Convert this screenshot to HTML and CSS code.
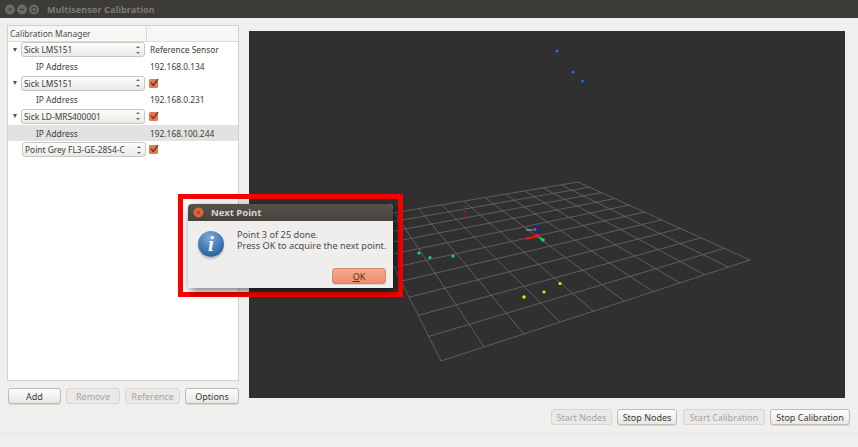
FILE: index.html
```html
<!DOCTYPE html>
<html>
<head>
    <meta charset="UTF-8">
    <title>Multisensor Calibration</title>
    <link rel="stylesheet" href="styles.css">
</head>
<body>
    <div class="window">
        <div class="titlebar">
            <div class="win-controls">
                <svg width="40" height="18" viewBox="0 0 40 18">
                    <circle cx="10" cy="9.5" r="5" fill="#6b6a65"/>
                    <path d="M8.500 8l3 3M11.500 8l-3 3" stroke="#3c3b37" stroke-width="1"/>
                    <circle cx="22" cy="9.5" r="5" fill="#6b6a65"/>
                    <path d="M19.800 9.5h4.400" stroke="#3c3b37" stroke-width="1.2"/>
                    <circle cx="34" cy="9.5" r="5" fill="#6b6a65"/>
                    <rect x="32.100" y="7.600" width="3.800" height="3.800" fill="none" stroke="#3c3b37" stroke-width="1"/>
                </svg>
            </div>
            <span class="win-title">Multisensor Calibration</span>
        </div>

        <div class="main">
            <div class="left-panel">
                <div class="tree">
                    <div class="tree-header">
                        <div class="tree-header-cell">Calibration Manager</div>
                        <div class="tree-header-cell"></div>
                    </div>
                    <div class="tree-row">
                        <div class="tree-col"><span class="expander"></span><div class="combo">Sick LMS151<span class="spin"></span></div></div>
                        <div class="tree-val">Reference Sensor</div>
                    </div>
                    <div class="tree-row">
                        <div class="tree-col child">IP Address</div>
                        <div class="tree-val">192.168.0.134</div>
                    </div>
                    <div class="tree-row">
                        <div class="tree-col"><span class="expander"></span><div class="combo">Sick LMS151<span class="spin"></span></div></div>
                        <div class="tree-val"><svg class="check" width="10" height="10" viewBox="0 0 10 10"><rect y="1" width="9" height="9" rx="1.5" fill="#e8784f"/><path d="M2 4.800l2.300 2.600L9 1.200" fill="none" stroke="#5a3a2c" stroke-width="1.4"/></svg></div>
                    </div>
                    <div class="tree-row">
                        <div class="tree-col child">IP Address</div>
                        <div class="tree-val">192.168.0.231</div>
                    </div>
                    <div class="tree-row">
                        <div class="tree-col"><span class="expander"></span><div class="combo">Sick LD-MRS400001<span class="spin"></span></div></div>
                        <div class="tree-val"><svg class="check" width="10" height="10" viewBox="0 0 10 10"><rect y="1" width="9" height="9" rx="1.5" fill="#e8784f"/><path d="M2 4.800l2.300 2.600L9 1.200" fill="none" stroke="#5a3a2c" stroke-width="1.4"/></svg></div>
                    </div>
                    <div class="tree-row selected">
                        <div class="tree-col child">IP Address</div>
                        <div class="tree-val">192.168.100.244</div>
                    </div>
                    <div class="tree-row">
                        <div class="tree-col"><span class="no-expander"></span><div class="combo">Point Grey FL3-GE-28S4-C<span class="spin"></span></div></div>
                        <div class="tree-val"><svg class="check" width="10" height="10" viewBox="0 0 10 10"><rect y="1" width="9" height="9" rx="1.5" fill="#e8784f"/><path d="M2 4.800l2.300 2.600L9 1.200" fill="none" stroke="#5a3a2c" stroke-width="1.4"/></svg></div>
                    </div>
                </div>
                <div class="tree-buttons">
                    <button class="btn btn-add">Add</button>
                    <button class="btn btn-remove" disabled>Remove</button>
                    <button class="btn btn-reference" disabled>Reference</button>
                    <button class="btn btn-options">Options</button>
                </div>
            </div>

            <div class="viewport">
                <svg class="scene" width="596" height="367" viewBox="249 31 596 367">
                    <!-- grid, one direction -->
                    <path class="grid" d="M441 361L369 217M484.200 346.900L394.500 212.700M523.700 334L418.700 208.700M560 322.100L441.800 204.800M593.500 311.200L463.900 201.100M624.100 301.100L485 197.600M653.200 291.600L505.200 194.200M679.900 282.900L524.600 191M704.800 274.700L543.100 187.800M728.200 267.100L560.900 184.900M750 260L578 182"/>
                    <!-- grid, other direction -->
                    <path class="grid" d="M441 361L750 260M428.700 336.400L724.200 248.300M418.200 315.300L701.100 237.800M409.100 297.200L680.400 228.400M401.200 281.300L661.600 219.900M394.200 267.400L644.500 212.100M388 255L628.900 205.100M382.500 244L614.600 198.600M377.500 234.100L601.400 192.600M373.100 225.100L589.300 187.100M369 217L578 182"/>
                    <g fill="#2468e0">
                        <circle cx="557" cy="51" r="1.600"/>
                        <circle cx="573" cy="72" r="1.600"/>
                        <circle cx="582.500" cy="81" r="1.600"/>
                    </g>
                    <g fill="#14e05a">
                        <circle cx="419" cy="253" r="1.600"/>
                        <circle cx="430" cy="257.500" r="1.600"/>
                        <circle cx="453" cy="256" r="1.600"/>
                    </g>
                    <g fill="#e6f000">
                        <circle cx="524" cy="297" r="1.700"/>
                        <circle cx="544" cy="292" r="1.500"/>
                        <circle cx="560" cy="283.500" r="1.500"/>
                    </g>
                    <g fill="#c8141c">
                        <circle cx="465.500" cy="207" r="0.900"/>
                        <circle cx="465" cy="212" r="0.900"/>
                        <circle cx="465" cy="216.500" r="0.900"/>
                    </g>
                    <!-- sensor frame axes -->
                    <path d="M537.500 236V225" stroke="#1a1ae0" stroke-width="2"/>
                    <path d="M537.500 236L526 239" stroke="#f01010" stroke-width="2"/>
                    <path d="M537.500 236L543 240" stroke="#10d040" stroke-width="2"/>
                    <rect x="541.500" y="238.500" width="3" height="3" fill="#14e05a"/>
                    <rect x="535.500" y="234" width="4" height="4" fill="#e01818"/>
                    <text class="frame-label" x="526" y="231">laser0</text>
                </svg>
            </div>
        </div>

        <div class="action-buttons">
            <button class="btn btn-start-nodes" disabled>Start Nodes</button>
            <button class="btn btn-stop-nodes">Stop Nodes</button>
            <button class="btn btn-start-cal" disabled>Start Calibration</button>
            <button class="btn btn-stop-cal">Stop Calibration</button>
        </div>
        <div class="statusbar"></div>
    </div>

    <div class="highlight"></div>
    <div class="dialog">
        <div class="dialog-title">
            <svg width="11" height="11" viewBox="0 0 11 11"><circle cx="5.500" cy="5.500" r="5" fill="#e4643a"/><path d="M3.800 3.800l3.400 3.400M7.200 3.800l-3.400 3.400" stroke="#8a3418" stroke-width="1"/></svg>
            <span>Next Point</span>
        </div>
        <div class="dialog-body">
            <div class="info-icon">i</div>
            <div class="dialog-text">
                <div>Point 3 of 25 done.</div>
                <div>Press OK to acquire the next point.</div>
            </div>
        </div>
        <div class="dialog-foot">
            <button class="btn btn-ok"><u>O</u>K</button>
        </div>
    </div>
</body>
</html>
```

FILE: styles.css
```css
html, body { margin: 0; padding: 0; }
body { font-family: "Noto Sans", "Open Sans", sans-serif; font-size: 9px; color: #3c3b37; background: #f0efed; overflow: hidden; }

.window { width: 858px; height: 447px; display: flex; flex-direction: column; background: #f0efed; overflow: hidden; }

.titlebar { height: 18px; background: #3c3b37; display: flex; align-items: center; flex-shrink: 0; }
.win-controls { width: 47px; height: 18px; flex-shrink: 0; }
.win-title { color: #7d7a72; font-weight: bold; font-size: 9px; letter-spacing: 0.1px; }

.main { display: flex; height: 386px; padding: 7px 13px 0 7px; box-sizing: border-box; gap: 10px; flex-shrink: 0; }
.left-panel { width: 232px; display: flex; flex-direction: column; gap: 7px; flex-shrink: 0; }

.tree { height: 356px; background: #fff; border: 1px solid #d3d1ce; box-sizing: border-box; font-size: 8.4px; }
.tree-header { display: flex; height: 15.5px; box-sizing: border-box; border-bottom: 1px solid #dddbd8; background: #f7f6f5; }
.tree-header-cell { line-height: 16px; padding-left: 2px; color: #4c4b47; }
.tree-header-cell:first-child { width: 136px; border-right: 1px solid #dddbd8; }

.tree-row { display: flex; height: 16.67px; align-items: center; }
.tree-row.selected { background: #e3e2e0; }
.tree-col { width: 139px; display: flex; align-items: center; flex-shrink: 0; }
.tree-col.child { padding-left: 28px; width: 111px; }
.tree-val { padding-left: 3px; display: flex; align-items: center; }

.expander { width: 0; height: 0; margin: 0 4px 0 5px; border-left: 2.5px solid transparent; border-right: 2.5px solid transparent; border-top: 4px solid #555; }
.no-expander { width: 14px; }
.combo { width: 124px; height: 15px; line-height: 14px; padding-left: 2px; box-sizing: border-box; border: 1px solid #c8c6c2; border-radius: 3px; background: linear-gradient(#fdfdfc, #ebe9e6); position: relative; white-space: nowrap; }
.spin { position: absolute; right: 3px; top: 2.5px; width: 5px; height: 8px; }
.spin::before, .spin::after { content: ""; position: absolute; left: 0; width: 0; height: 0; border-left: 2.5px solid transparent; border-right: 2.5px solid transparent; }
.spin::before { top: 0; border-bottom: 2.5px solid #666; }
.spin::after { bottom: 0; border-top: 2.5px solid #666; }
.check { display: block; margin: -1px 0 0 -1px; }

.btn { font-family: inherit; font-size: 9px; color: #3c3b37; height: 16px; padding: 0; border: 1px solid #bdbbb7; border-radius: 3px; background: linear-gradient(#fcfcfb, #e9e7e4); box-shadow: 0 1px 0 #d8d6d3; }
.btn:disabled { color: #a6a4a0; border-color: #d8d6d3; background: #ebe9e7; box-shadow: none; }

.tree-buttons { display: flex; padding-left: 1px; }
.btn-add { width: 53px; }
.btn-remove { width: 54px; margin-left: 5px; }
.btn-reference { width: 55px; margin-left: 5px; }
.btn-options { width: 54px; margin-left: 5px; }

.viewport { margin: 6px 0 6px; flex: 1; background: #303030; }
.scene { display: block; }
.grid { fill: none; stroke: #6a6a6a; stroke-width: 0.8; }
.frame-label { font-size: 3.500px; fill: #ddd; }

.action-buttons { display: flex; justify-content: flex-end; padding: 5px 8px 0 0; height: 16px; flex-shrink: 0; }
.btn-start-nodes { width: 61px; }
.btn-stop-nodes { width: 60px; margin-left: 5px; }
.btn-start-cal { width: 82px; margin-left: 6px; }
.btn-stop-cal { width: 80px; margin-left: 5px; }

.statusbar { margin-top: 8px; flex: 1; border-top: 1px solid #e8e6e4; }

/* marker drawn over the screenshot */
.highlight { position: absolute; left: 178px; top: 194px; width: 215px; height: 93px; border: 5px solid #fa0000; }

.dialog { position: absolute; left: 188px; top: 204px; width: 205px; height: 84px; background: #f0eeec; border-radius: 4px 4px 0 0; box-shadow: 2px 3px 10px rgba(0, 0, 0, 0.55); display: flex; flex-direction: column; }
.dialog-title { height: 17px; background: linear-gradient(#55524a, #45433d); border-radius: 4px 4px 0 0; display: flex; align-items: center; padding-left: 5px; gap: 7px; color: #d8d5cd; font-weight: bold; font-size: 9.5px; flex-shrink: 0; }
.dialog-body { display: flex; padding: 8px 0 0 10px; height: 35px; }
.info-icon { width: 26px; height: 26px; margin-top: 2px; border-radius: 50%; background: radial-gradient(circle at 45% 25%, #7eaad4, #3f78b4 55%, #1f4f87); box-shadow: 0 2px 2px rgba(0, 0, 0, 0.2); color: #fff; font-family: "Liberation Serif", serif; font-style: italic; font-weight: bold; font-size: 21px; line-height: 26px; text-align: center; flex-shrink: 0; }
.dialog-text { margin-left: 13px; font-size: 9.2px; line-height: 11px; color: #4c4b47; white-space: nowrap; }
.dialog-foot { display: flex; justify-content: flex-end; padding: 0 7px 0 0; margin-top: 4px; }
.btn-ok { width: 54px; height: 16px; background: linear-gradient(#f7ab8d, #ee8c69); border-color: #cf8a70; color: #4c3026; }
```
